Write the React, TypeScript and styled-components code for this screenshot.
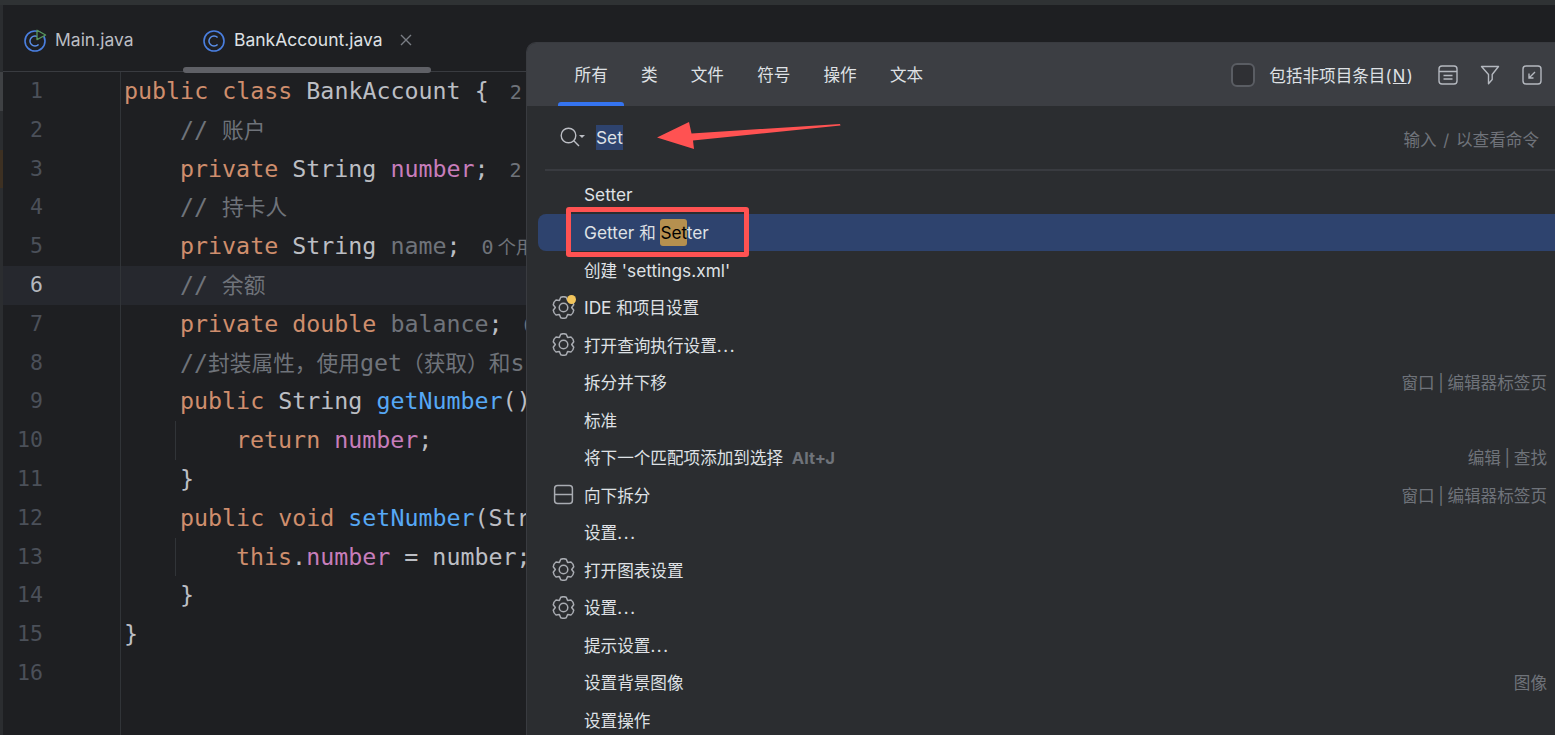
import React from 'react'
import styled, { createGlobalStyle } from 'styled-components'

const GlobalStyle = createGlobalStyle`
    html, body {
        margin: 0;
        padding: 0;
        height: 735px;
        overflow: hidden;
        background: #1e1f22;
    }
    #root {
        height: 735px;
    }
`

const UI_FONT = `Inter, "Noto Sans CJK SC", sans-serif`
const CODE_FONT = `"DejaVu Sans Mono", "Noto Sans CJK SC", monospace`

const COLORS: Record<string, string> = {
    kw: '#cf8e6d',
    id: '#bcbec4',
    field: '#c77dbb',
    method: '#56a8f5',
    comment: '#6f737a',
    unused: '#6f737a',
    inlay: '#6f737a',
    inlayCjk: '#6f737a',
}

type Tok = [string, string, boolean?]
type CodeLine = { level: number; guide?: boolean; mark?: string; toks: Tok[] }

const CODE: CodeLine[] = [
    { level: 0, mark: '#3f4144', toks: [['kw', 'public class '], ['id', 'BankAccount {'], ['inlay', '2']] },
    { level: 1, toks: [['comment', '// '], ['comment', '账户', true]] },
    { level: 1, mark: '#3d3022', toks: [['kw', 'private '], ['id', 'String '], ['field', 'number'], ['id', ';'], ['inlay', '2']] },
    { level: 1, toks: [['comment', '// '], ['comment', '持卡人', true]] },
    { level: 1, toks: [['kw', 'private '], ['id', 'String '], ['unused', 'name'], ['id', ';'], ['inlay', '0'], ['inlayCjk', '个用法']] },
    { level: 1, toks: [['comment', '// '], ['comment', '余额', true]] },
    { level: 1, toks: [['kw', 'private double '], ['unused', 'balance'], ['id', ';'], ['inlay', '0']] },
    { level: 1, toks: [['comment', '//'], ['comment', '封装属性，使用', true], ['comment', 'get'], ['comment', '（获取）和', true], ['comment', 's']] },
    { level: 1, toks: [['kw', 'public '], ['id', 'String '], ['method', 'getNumber'], ['id', '()']] },
    { level: 2, guide: true, toks: [['kw', 'return '], ['field', 'number'], ['id', ';']] },
    { level: 1, toks: [['id', '}']] },
    { level: 1, toks: [['kw', 'public void '], ['method', 'setNumber'], ['id', '(Str']] },
    { level: 2, guide: true, toks: [['kw', 'this'], ['id', '.'], ['field', 'number'], ['id', ' = number;']] },
    { level: 1, toks: [['id', '}']] },
    { level: 0, toks: [['id', '}']] },
    { level: 0, toks: [] },
]

type Item = { label: React.ReactNode; icon?: 'gear' | 'gearDot' | 'split'; hint?: string; selected?: boolean }

const getItems = (): Item[] => [
    { label: <Lat>Setter</Lat> },
    { label: <><Lat>Getter </Lat>和 <Match>Set</Match><Lat>ter</Lat></>, selected: true },
    { label: <>创建 <Lat>'settings.xml'</Lat></> },
    { label: <><Lat>IDE</Lat> 和项目设置</>, icon: 'gearDot' },
    { label: <>打开查询执行设置<Dots>...</Dots></>, icon: 'gear' },
    { label: '拆分并下移', hint: '窗口 | 编辑器标签页' },
    { label: '标准' },
    { label: <>将下一个匹配项添加到选择 <Shortcut>Alt+J</Shortcut></>, hint: '编辑 | 查找' },
    { label: '向下拆分', icon: 'split', hint: '窗口 | 编辑器标签页' },
    { label: <>设置<Dots>...</Dots></> },
    { label: '打开图表设置', icon: 'gear' },
    { label: <>设置<Dots>...</Dots></>, icon: 'gear' },
    { label: <>提示设置<Dots>...</Dots></> },
    { label: '设置背景图像', hint: '图像' },
    { label: '设置操作' },
]

const TABS = ['所有', '类', '文件', '符号', '操作', '文本']

// six rounded lobes round the centre, same outline as the IDE settings icon
const gearOutline = () => {
    const pt = (deg: number, r: number) => {
        const a = (deg * Math.PI) / 180
        return `${(11.5 + r * Math.cos(a)).toFixed(2)} ${(11.5 + r * Math.sin(a)).toFixed(2)}`
    }
    let d = ''
    for (let k = 0; k < 6; k++) {
        const t = -90 + k * 60
        d += `${k === 0 ? 'M' : 'L'}${pt(t - 30, 8.2)} L${pt(t - 15, 10.6)} Q${pt(t, 11.4)} ${pt(t + 15, 10.6)} `
    }
    return d + 'Z'
}

const ClassIcon = ({ run }: { run?: boolean }) => (
    <svg width="24" height="24" viewBox="0 0 24 24" fill="none">
        <circle cx="12" cy="13" r="10" stroke="#4a7fe0" strokeWidth="1.6" />
        <path d="M15.6 9.6a5 5 0 1 0 0 6.8" stroke="#5b8fe8" strokeWidth="1.5" />
        {run && <path d="M14 2.2 L22.6 7 L14 11.6 Z" fill="#1e1f22" stroke="#57965c" strokeWidth="1.3" strokeLinejoin="round" />}
    </svg>
)

const GearIcon = ({ dot }: { dot?: boolean }) => (
    <IconSlot>
        <svg width="23" height="23" viewBox="0 0 23 23" fill="none" stroke="#a9acb2" strokeWidth="1.5" strokeLinejoin="round">
            <path d={gearOutline()} />
            <circle cx="11.5" cy="11.5" r="4.3" />
        </svg>
        {dot && <Dot />}
    </IconSlot>
)

const SplitIcon = () => (
    <IconSlot>
        <svg width="23" height="23" viewBox="0 0 23 23" fill="none">
            <rect x="2.6" y="2.6" width="17.8" height="17.8" rx="3" stroke="#a9acb2" strokeWidth="1.5" />
            <path d="M2.6 11.5H20.4" stroke="#a9acb2" strokeWidth="1.5" />
        </svg>
    </IconSlot>
)

const App = () => {
    return (
        <Page>
            <GlobalStyle />
            <TopStrip />
            <TabBar>
                <FileTab $width={177} $pad={17}>
                    <ClassIcon run />
                    <FileName>Main.java</FileName>
                </FileTab>
                <FileTab $width={248} $pad={19} $active>
                    <ClassIcon />
                    <FileName $active>BankAccount.java</FileName>
                    <CloseMark viewBox="0 0 12 12">
                        <path d="M1 1L11 11M11 1L1 11" stroke="#7a7e85" strokeWidth="1.4" />
                    </CloseMark>
                </FileTab>
            </TabBar>
            <Editor>
                {CODE.map((line, i) => (
                    <Row key={i} $current={i === 5} $mark={line.mark}>
                        <LineNo $current={i === 5}>{i + 1}</LineNo>
                        <Code $level={line.level} $guide={line.guide}>
                            {line.toks.map(([kind, text, cjk], j) => (
                                <CodeTok key={j} $color={COLORS[kind]} $cjk={cjk} $kind={kind}>{text}</CodeTok>
                            ))}
                        </Code>
                    </Row>
                ))}
                <Filler><LineNo /><Code $level={0} /></Filler>
            </Editor>

            <Panel>
                <PanelHeader>
                    {TABS.map((t, i) => <ScopeTab key={t} $active={i === 0}>{t}</ScopeTab>)}
                    <HeaderRight>
                        <CheckBox />
                        <CheckLabel>包括非项目条目<Mnemonic>(<u>N</u>)</Mnemonic></CheckLabel>
                        <ToolIcons>
                            <svg width="20" height="20" viewBox="0 0 20 20" fill="none" stroke="#b4b8bf" strokeWidth="1.4">
                                <rect x="1" y="1" width="18" height="18" rx="3" />
                                <path d="M1 6.5H19M5.5 10.5H14.5M5.5 14H14.5" />
                            </svg>
                            <svg width="20" height="20" viewBox="0 0 20 20" fill="none" stroke="#b4b8bf" strokeWidth="1.4" strokeLinejoin="round">
                                <path d="M1.5 1.5H18.5L12.2 9.5V14.5L8.5 18.8V9.5Z" />
                            </svg>
                            <svg width="20" height="20" viewBox="0 0 20 20" fill="none" stroke="#b4b8bf" strokeWidth="1.4">
                                <rect x="1" y="1" width="18" height="18" rx="3" />
                                <path d="M13 7L7 13M7 8.5V13H11.5" />
                            </svg>
                        </ToolIcons>
                    </HeaderRight>
                </PanelHeader>
                <SearchRow>
                    <svg width="26" height="22" viewBox="0 0 26 22" fill="none">
                        <circle cx="8.5" cy="8.5" r="7.3" stroke="#bcbec4" strokeWidth="1.4" />
                        <path d="M13.8 13.8L19 19" stroke="#bcbec4" strokeWidth="1.4" />
                        <path d="M19 8H25L22 11Z" fill="#bcbec4" />
                    </svg>
                    <SearchText>Set</SearchText>
                    <SearchHint>输入 / 以查看命令</SearchHint>
                </SearchRow>
                <Divider />
                <List>
                    {getItems().map((item, i) => (
                        <ListRow key={i} $selected={item.selected}>
                            {item.icon === 'gear' && <GearIcon />}
                            {item.icon === 'gearDot' && <GearIcon dot />}
                            {item.icon === 'split' && <SplitIcon />}
                            {!item.icon && <IconSlot />}
                            <RowLabel>{item.label}</RowLabel>
                            {item.hint && <RowHint>{item.hint}</RowHint>}
                        </ListRow>
                    ))}
                </List>
            </Panel>

            <Callout />
            <Arrow viewBox="0 0 190 32">
                <path d="M0 15.5 L32 0 L34.5 11.5 L183 2 L183.5 3.5 L36 18.5 L37 27 Z" fill="#ff5252" />
            </Arrow>
        </Page>
    )
}

export default App

const Page = styled.div`
    position: relative;
    width: 1555px;
    height: 735px;
    overflow: hidden;
    display: flex;
    flex-direction: column;
    background: #2b2d30;
    padding-left: 3px;
    box-sizing: border-box;
`

const TopStrip = styled.div`
    height: 5px;
    margin-left: -3px;
    background: #2f3234;
    flex: none;
`

const TabBar = styled.div`
    height: 66px;
    flex: none;
    display: flex;
    padding-left: 3px;
    border-bottom: 1px solid #393b40;
    align-items: stretch;
    background: #1e1f22;
`

const FileTab = styled.div<{ $width: number; $pad: number; $active?: boolean }>`
    position: relative;
    width: ${p => p.$width}px;
    display: flex;
    align-items: center;
    gap: 8px;
    padding: 3px 0 0 ${p => p.$pad}px;
    box-sizing: border-box;
    &::after {
        content: '';
        display: ${p => (p.$active ? 'block' : 'none')};
        position: absolute;
        left: 0;
        right: 0;
        bottom: -2px;
        height: 6px;
        border-radius: 3px;
        background: #5f6066;
    }
`

const FileName = styled.span<{ $active?: boolean }>`
    font: 17.5px ${UI_FONT};
    color: ${p => (p.$active ? '#dfe1e5' : '#bcbec4')};
`

const CloseMark = styled.svg`
    width: 12px;
    height: 12px;
    margin-left: 9px;
`

const Editor = styled.div`
    flex: 1;
    display: flex;
    flex-direction: column;
    min-height: 0;
    background: #1e1f22;
`

const Row = styled.div<{ $current?: boolean; $mark?: string }>`
    height: 38.8px;
    flex: none;
    display: flex;
    align-items: stretch;
    background: ${p => (p.$current ? '#26282e' : 'transparent')};
    box-shadow: ${p => (p.$mark ? `-3px 0 0 ${p.$mark}` : 'none')};
`

const Filler = styled.div`
    flex: 1;
    display: flex;
`

const LineNo = styled.div<{ $current?: boolean }>`
    width: 117px;
    flex: none;
    box-sizing: border-box;
    padding-right: 77px;
    text-align: right;
    font: 21.5px/38.8px ${CODE_FONT};
    color: ${p => (p.$current ? '#b4b8bf' : '#4b5059')};
`

const Code = styled.div<{ $level: number; $guide?: boolean }>`
    flex: 1;
    border-left: 1px solid #313438;
    padding-left: ${p => 3 + p.$level * 56}px;
    white-space: pre;
    font: 23.3px/38.8px ${CODE_FONT};
    background: ${p => (p.$guide ? 'linear-gradient(#313438, #313438) 54px 0 / 1px 100% no-repeat' : 'none')};
`

const CodeTok = styled.span<{ $color: string; $cjk?: boolean; $kind: string }>`
    color: ${p => p.$color};
    font-size: ${p => (p.$cjk ? '21.7px' : p.$kind === 'inlay' ? '20px' : p.$kind === 'inlayCjk' ? '18.5px' : '23.3px')};
    margin-left: ${p => (p.$kind === 'inlay' ? '21px' : p.$kind === 'inlayCjk' ? '4px' : '0')};
`

const Panel = styled.div`
    position: absolute;
    left: 526px;
    top: 42px;
    right: 0;
    bottom: 0;
    display: flex;
    flex-direction: column;
    background: #2b2d30;
    border-radius: 10px 0 0 0;
    border: 1px solid #393b40;
    border-width: 1px 0 0 1px;
    overflow: hidden;
    font-family: ${UI_FONT};
    z-index: 1;
`

const PanelHeader = styled.div`
    height: 63px;
    flex: none;
    display: flex;
    align-items: stretch;
    padding-left: 31px;
    background: #3c3e43;
`

const ScopeTab = styled.div<{ $active?: boolean }>`
    position: relative;
    padding: 0 16.6px;
    line-height: 64px;
    font-size: 16.6px;
    color: #dfe1e5;
    &::after {
        content: '';
        display: ${p => (p.$active ? 'block' : 'none')};
        position: absolute;
        left: 0;
        right: 0;
        bottom: 0;
        height: 4px;
        border-radius: 3px 3px 0 0;
        background: #3574f0;
    }
`

const HeaderRight = styled.div`
    margin-left: auto;
    display: flex;
    align-items: center;
    padding-right: 13px;
`

const CheckBox = styled.div`
    width: 24px;
    height: 24px;
    box-sizing: border-box;
    border: 2px solid #5a5d63;
    border-radius: 6px;
    background: #2f3034;
`

const CheckLabel = styled.span`
    margin-left: 14px;
    font-size: 16.6px;
    color: #dfe1e5;
`

const Mnemonic = styled.span`
    letter-spacing: 1.3px;
`

const ToolIcons = styled.div`
    display: flex;
    gap: 22px;
    margin-left: 24px;
`

const SearchRow = styled.div`
    height: 63px;
    flex: none;
    display: flex;
    align-items: center;
    padding-left: 33px;
    padding-right: 16px;
    box-sizing: border-box;
`

const SearchText = styled.span`
    margin-left: 10px;
    height: 25px;
    line-height: 25px;
    font-size: 17.3px;
    color: #dfe1e5;
    background: #2e436e;
`

const SearchHint = styled.span`
    margin-left: auto;
    margin-top: 2px;
    font-size: 16.6px;
    word-spacing: 2px;
    color: #6f737a;
`

const Divider = styled.div`
    height: 2px;
    flex: none;
    margin-left: 18px;
    background: #393b40;
`

const List = styled.div`
    padding: 5px 0 0 11px;
    display: flex;
    flex-direction: column;
`

const ListRow = styled.div<{ $selected?: boolean }>`
    height: 37.5px;
    flex: none;
    display: flex;
    align-items: center;
    padding-right: 8px;
    border-radius: 8px 0 0 8px;
    background: ${p => (p.$selected ? '#2e436e' : 'transparent')};
`

const IconSlot = styled.div`
    position: relative;
    width: 46px;
    flex: none;
    padding-left: 14px;
    box-sizing: border-box;
    display: flex;
    align-items: center;
`

const Dot = styled.span`
    position: absolute;
    left: 29px;
    top: -1px;
    width: 9px;
    height: 9px;
    border-radius: 50%;
    background: #f2c55c;
`

const RowLabel = styled.span`
    font-size: 16.6px;
    color: #dfe1e5;
    white-space: pre;
`

const Lat = styled.span`
    font-size: 17.3px;
`

const Dots = styled.span`
    letter-spacing: 1.7px;
`

const RowHint = styled.span`
    margin-left: auto;
    font-size: 16.6px;
    word-spacing: -1px;
    color: #6f737a;
`

const Match = styled.span`
    padding: 3px 0;
    font-size: 17.3px;
    border-radius: 3px;
    background: #b5904f;
    color: #000;
`

const Shortcut = styled.span`
    margin-left: 4px;
    font-weight: 700;
    color: #6f737a;
`

const Callout = styled.div`
    position: absolute;
    left: 566px;
    top: 207px;
    width: 183px;
    height: 50px;
    box-sizing: border-box;
    border: 5px solid #ff5252;
    border-radius: 3px;
    z-index: 2;
`

const Arrow = styled.svg`
    position: absolute;
    left: 657px;
    top: 122px;
    width: 190px;
    height: 32px;
    z-index: 2;
`
